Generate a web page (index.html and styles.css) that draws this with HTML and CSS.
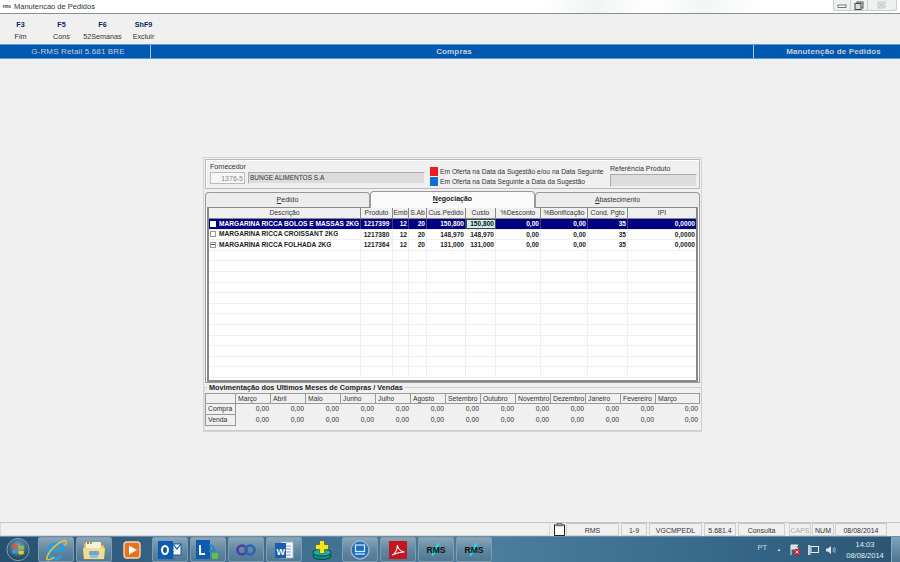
FILE: index.html
```html
<!DOCTYPE html>
<html lang="pt">
<head>
<meta charset="utf-8">
<title>Manutencao de Pedidos</title>
<link rel="stylesheet" href="styles.css">
</head>
<body>
<div class="app">
  <header class="titlebar">
    <span class="app-icon">rms</span>
    <span class="title-text">Manutencao de Pedidos</span>
    <div class="winctl">
      <span class="wbtn"><svg width="10" height="8" viewBox="0 0 10 8"><rect x="1" y="4" width="8" height="2.4" fill="#fff" stroke="#555" stroke-width=".8"/></svg></span>
      <span class="wbtn"><svg width="10" height="9" viewBox="0 0 10 9"><rect x="3" y="1" width="6" height="6" fill="#ddd" stroke="#555"/><rect x="1" y="2.500" width="6" height="6" fill="#ddd" stroke="#444"/></svg></span>
      <span class="wbtn wide"><svg width="10" height="8" viewBox="0 0 10 8"><rect x="1" y="1" width="7" height="6" fill="#e3e3e3" stroke="#ccc"/><path d="M2 2l5 4M7 2l-5 4" stroke="#c4c4c4"/></svg></span>
    </div>
  </header>

  <nav class="toolbar">
    <div class="tool"><b>F3</b><span>Fim</span></div>
    <div class="tool"><b>F5</b><span>Cons</span></div>
    <div class="tool"><b>F6</b><span>52Semanas</span></div>
    <div class="tool"><b>ShF9</b><span>Excluir</span></div>
  </nav>

  <div class="banner">
    <div class="b-left">G-RMS Retail 5.681 BRE</div>
    <div class="b-mid">Compras</div>
    <div class="b-right">Manutenção de Pedidos</div>
  </div>

  <main class="workspace">
    <section class="panel">
      <div class="supplier">
        <div class="sup-left">
          <div class="lbl">Fornecedor</div>
          <div class="sup-fields">
            <span class="code">1376-5</span>
            <span class="name">BUNGE ALIMENTOS S.A</span>
          </div>
        </div>
        <div class="legend">
          <div class="leg-row"><i class="sw red"></i>Em Oferta na Data da Sugestão e/ou na Data Seguinte</div>
          <div class="leg-row"><i class="sw blue"></i>Em Oferta na Data Seguinte a Data da Sugestão</div>
        </div>
        <div class="ref">
          <div class="lbl">Referência Produto</div>
          <div class="ref-box"></div>
        </div>
      </div>

      <div class="tabs">
        <div class="tab t1"><u>P</u>edido</div>
        <div class="tab t2 active"><u>N</u>egociação</div>
        <div class="tab t3"><u>A</u>bastecimento</div>
      </div>

      <div class="tabpage">
        <div class="grid">
          <div class="row head">
            <div class="c">Descrição</div><div class="c">Produto</div><div class="c">Emb</div><div class="c">S.Ab</div><div class="c">Cus.Pedido</div><div class="c">Custo</div><div class="c">%Desconto</div><div class="c">%Bonificação</div><div class="c">Cond. Pgto</div><div class="c">IPI</div>
          </div>
          <div class="row data sel">
            <div class="c l"><i class="chk on"></i><span class="clip">MARGARINA RICCA BOLOS E MASSAS 2KG</span></div><div class="c">1217399</div><div class="c r">12</div><div class="c r">20</div><div class="c r">150,800</div><div class="c r cur">150,800</div><div class="c r">0,00</div><div class="c r">0,00</div><div class="c r">35</div><div class="c r">0,0000</div>
          </div>
          <div class="row data">
            <div class="c l"><i class="chk"></i><span class="clip">MARGARINA RICCA CROISSANT 2KG</span></div><div class="c">1217380</div><div class="c r">12</div><div class="c r">20</div><div class="c r">148,970</div><div class="c r">148,970</div><div class="c r">0,00</div><div class="c r">0,00</div><div class="c r">35</div><div class="c r">0,0000</div>
          </div>
          <div class="row data">
            <div class="c l"><i class="chk minus"></i><span class="clip">MARGARINA RICCA FOLHADA 2KG</span></div><div class="c">1217364</div><div class="c r">12</div><div class="c r">20</div><div class="c r">131,000</div><div class="c r">131,000</div><div class="c r">0,00</div><div class="c r">0,00</div><div class="c r">35</div><div class="c r">0,0000</div>
          </div>
          <div class="row data"><div class="c"></div><div class="c"></div><div class="c"></div><div class="c"></div><div class="c"></div><div class="c"></div><div class="c"></div><div class="c"></div><div class="c"></div><div class="c"></div></div>
          <div class="row data"><div class="c"></div><div class="c"></div><div class="c"></div><div class="c"></div><div class="c"></div><div class="c"></div><div class="c"></div><div class="c"></div><div class="c"></div><div class="c"></div></div>
          <div class="row data"><div class="c"></div><div class="c"></div><div class="c"></div><div class="c"></div><div class="c"></div><div class="c"></div><div class="c"></div><div class="c"></div><div class="c"></div><div class="c"></div></div>
          <div class="row data"><div class="c"></div><div class="c"></div><div class="c"></div><div class="c"></div><div class="c"></div><div class="c"></div><div class="c"></div><div class="c"></div><div class="c"></div><div class="c"></div></div>
          <div class="row data"><div class="c"></div><div class="c"></div><div class="c"></div><div class="c"></div><div class="c"></div><div class="c"></div><div class="c"></div><div class="c"></div><div class="c"></div><div class="c"></div></div>
          <div class="row data"><div class="c"></div><div class="c"></div><div class="c"></div><div class="c"></div><div class="c"></div><div class="c"></div><div class="c"></div><div class="c"></div><div class="c"></div><div class="c"></div></div>
          <div class="row data"><div class="c"></div><div class="c"></div><div class="c"></div><div class="c"></div><div class="c"></div><div class="c"></div><div class="c"></div><div class="c"></div><div class="c"></div><div class="c"></div></div>
          <div class="row data"><div class="c"></div><div class="c"></div><div class="c"></div><div class="c"></div><div class="c"></div><div class="c"></div><div class="c"></div><div class="c"></div><div class="c"></div><div class="c"></div></div>
          <div class="row data"><div class="c"></div><div class="c"></div><div class="c"></div><div class="c"></div><div class="c"></div><div class="c"></div><div class="c"></div><div class="c"></div><div class="c"></div><div class="c"></div></div>
          <div class="row data"><div class="c"></div><div class="c"></div><div class="c"></div><div class="c"></div><div class="c"></div><div class="c"></div><div class="c"></div><div class="c"></div><div class="c"></div><div class="c"></div></div>
          <div class="row data"><div class="c"></div><div class="c"></div><div class="c"></div><div class="c"></div><div class="c"></div><div class="c"></div><div class="c"></div><div class="c"></div><div class="c"></div><div class="c"></div></div>
          <div class="row data"><div class="c"></div><div class="c"></div><div class="c"></div><div class="c"></div><div class="c"></div><div class="c"></div><div class="c"></div><div class="c"></div><div class="c"></div><div class="c"></div></div>
        </div>
      </div>

      <fieldset class="moves">
        <legend>Movimentação dos Ultimos Meses de Compras / Vendas</legend>
        <div class="mgrid">
          <div class="m h"></div><div class="m h">Março</div><div class="m h">Abril</div><div class="m h">Maio</div><div class="m h">Junho</div><div class="m h">Julho</div><div class="m h">Agosto</div><div class="m h">Setembro</div><div class="m h">Outubro</div><div class="m h">Novembro</div><div class="m h">Dezembro</div><div class="m h">Janeiro</div><div class="m h">Fevereiro</div><div class="m h">Março</div>
          <div class="m h">Compra</div><div class="m v">0,00</div><div class="m v">0,00</div><div class="m v">0,00</div><div class="m v">0,00</div><div class="m v">0,00</div><div class="m v">0,00</div><div class="m v">0,00</div><div class="m v">0,00</div><div class="m v">0,00</div><div class="m v">0,00</div><div class="m v">0,00</div><div class="m v">0,00</div><div class="m v">0,00</div>
          <div class="m h">Venda</div><div class="m v">0,00</div><div class="m v">0,00</div><div class="m v">0,00</div><div class="m v">0,00</div><div class="m v">0,00</div><div class="m v">0,00</div><div class="m v">0,00</div><div class="m v">0,00</div><div class="m v">0,00</div><div class="m v">0,00</div><div class="m v">0,00</div><div class="m v">0,00</div><div class="m v">0,00</div>
        </div>
      </fieldset>
    </section>
  </main>

  <footer class="status">
    <div class="st-spacer"></div>
    <div class="st st-ico"><svg width="13" height="13" viewBox="0 0 13 13"><rect x="1.500" y="2" width="10" height="10.500" fill="#fff" stroke="#222"/><rect x="4" y="0.500" width="5" height="2.500" fill="#999" stroke="#444" stroke-width=".6"/></svg></div>
    <div class="st s1">RMS</div>
    <div class="st s2">1-9</div>
    <div class="st s3">VGCMPEDL</div>
    <div class="st s4">5.681.4</div>
    <div class="st s5">Consulta</div>
    <div class="st s6 off">CAPS</div>
    <div class="st s7">NUM</div>
    <div class="st s8">08/08/2014</div>
  </footer>

  <div class="taskbar">
    <div class="start"><svg width="26" height="25" viewBox="0 0 26 26">
      <defs><radialGradient id="orb" cx=".5" cy=".35" r=".7"><stop offset="0" stop-color="#6fa8c8"/><stop offset="1" stop-color="#12314a"/></radialGradient></defs>
      <circle cx="13" cy="13" r="11.500" fill="url(#orb)" stroke="#8aa3b4" stroke-width="1"/>
      <path d="M7 8.500q3-1.200 5.500 0v4q-2.500-1-5.500 0z" fill="#e8552a"/>
      <path d="M13.500 8.700q3 1.200 5.500 0v4q-3 1.200-5.500 0z" fill="#8cc63e"/>
      <path d="M7 13.500q3-1 5.500 0v4q-2.500-1-5.500 0z" fill="#3a9ad9"/>
      <path d="M13.500 13.700q3 1.200 5.500 0v4q-3 1.200-5.500 0z" fill="#f5c32c"/>
    </svg></div>

    <div class="tb on"><svg width="24" height="24" viewBox="0 0 24 24"><path d="M19.500 12.500a7.500 7.500 0 1 0-2 6" fill="none" stroke="#2a9be0" stroke-width="3"/><rect x="6" y="11.200" width="13.500" height="2.400" fill="#2a9be0"/><path d="M2.500 21C4 14 12 5 21 2.500c1.500 0 1.500 2.500 0 5" fill="none" stroke="#f0c23a" stroke-width="1.400"/><path d="M2.500 21c1.500 2 5 0 8-2" fill="none" stroke="#f0c23a" stroke-width="1.400"/></svg></div>

    <div class="tb on"><svg width="24" height="22" viewBox="0 0 24 22"><path d="M2 4h7l2 2h11v14H2z" fill="#e6c66a" stroke="#b99a4a" stroke-width=".6"/><rect x="4" y="3" width="15" height="6" fill="#f6f1d8"/><circle cx="6" cy="4" r="1" fill="#c33"/><circle cx="9" cy="4" r="1" fill="#3a3"/><path d="M1 9h22l-1 11H2z" fill="#f4dc8e"/><rect x="7" y="12" width="10" height="4" rx="1" fill="#6fa7d6"/><rect x="8" y="16" width="8" height="3" fill="#8ebfe4"/></svg></div>

    <div class="tb"><svg width="20" height="20" viewBox="0 0 20 20"><rect x="2" y="2" width="16" height="16" rx="3" fill="#e8731c" stroke="#f3d6b8" stroke-width="1.400"/><path d="M7 5.500l8 4.500-8 4.500z" fill="#fff"/></svg></div>

    <div class="tb on"><svg width="24" height="20" viewBox="0 0 24 20"><rect x="0" y="1" width="15" height="18" fill="#0c5bb0"/><ellipse cx="7" cy="10" rx="3" ry="4" fill="none" stroke="#fff" stroke-width="2"/><rect x="15" y="4" width="8" height="11" fill="#fff"/><path d="M15 4l4 5 4-5" fill="none" stroke="#0c5bb0" stroke-width="1.200"/><rect x="15" y="4" width="8" height="11" fill="none" stroke="#0c5bb0"/></svg></div>

    <div class="tb on"><svg width="24" height="20" viewBox="0 0 24 20"><rect x="0" y="0" width="14" height="19" fill="#0c5bb0"/><path d="M4 5v9h5" fill="none" stroke="#fff" stroke-width="2"/><path d="M13 5a5 5 0 0 1 5 5v1h-5" fill="none" stroke="#1f86d0" stroke-width="2"/><rect x="16" y="13" width="6" height="6" fill="#5fc24a"/></svg></div>

    <div class="tb on"><svg width="24" height="14" viewBox="0 0 24 14"><circle cx="8" cy="7" r="4.500" fill="none" stroke="#4a3fa0" stroke-width="2.600"/><circle cx="16" cy="7" r="4.500" fill="none" stroke="#2d63b5" stroke-width="2.600"/></svg></div>

    <div class="tb on"><svg width="20" height="20" viewBox="0 0 20 20"><rect x="7" y="2" width="12" height="16" fill="#fff" stroke="#9bb6d6"/><path d="M12 6h5M12 9h5M12 12h5M12 15h5" stroke="#6d94c6"/><rect x="1" y="3" width="11" height="15" fill="#1e5dab"/><text x="2.600" y="14.500" class="word-w">W</text></svg></div>

    <div class="tb"><svg width="20" height="22" viewBox="0 0 20 22"><ellipse cx="10" cy="17" rx="9" ry="3.500" fill="#0e8f8a" stroke="#04403d"/><ellipse cx="10" cy="13.500" rx="9" ry="3.500" fill="#17b0a6" stroke="#04403d"/><path d="M7.500 1.500h5v4h4v5h-4v4h-5v-4h-4v-5h4z" fill="#f3e61c" stroke="#444" stroke-width=".6"/></svg></div>

    <div class="tb on"><svg width="20" height="20" viewBox="0 0 20 20"><circle cx="10" cy="10" r="9" fill="#1c6fc0" stroke="#9fb3c4" stroke-width="1.400"/><rect x="5.500" y="5" width="9" height="6.500" fill="none" stroke="#dcecf8" stroke-width="1.200"/><path d="M5 14h10" stroke="#dcecf8" stroke-width="1.200"/></svg></div>

    <div class="tb on"><svg width="18" height="18" viewBox="0 0 18 18"><rect width="18" height="18" fill="#c4161c"/><path d="M3 14c3-1 5-5 5.500-10 .5 4 3 6.500 7 7-4 0-8 1-12.500 3z" fill="none" stroke="#fff" stroke-width="1.100"/></svg></div>

    <div class="tb on fms"><span class="swoosh"></span><b>RMS</b></div>
    <div class="tb on fms"><span class="swoosh"></span><b>RMS</b></div>

    <div class="tray">
      <span class="lang">PT</span>
      <span class="arrow">▲</span>
      <svg width="12" height="12" viewBox="0 0 12 12"><path d="M2 1v10M2 1h7l-1.500 2L9 5H2" fill="#ddd" stroke="#eee"/><circle cx="8" cy="8" r="3.200" fill="#c9252c"/><path d="M6.500 6.500l3 3M9.500 6.500l-3 3" stroke="#fff" stroke-width=".8"/></svg>
      <svg width="12" height="12" viewBox="0 0 12 12"><rect x="4" y="2.500" width="7.500" height="6" fill="none" stroke="#e6edf2"/><path d="M1 1h2.500v10H1z" fill="#c6d3dc"/></svg>
      <svg width="12" height="12" viewBox="0 0 12 12"><path d="M1 4.500h2L6 2v8L3 7.500H1z" fill="#dde6ec"/><path d="M8 4q1 2 0 4M9.500 3q1.500 3 0 6" fill="none" stroke="#b7c8d4" stroke-width=".8"/></svg>
      <div class="clock"><div>14:03</div><div>08/08/2014</div></div>
      <div class="showdesk"></div>
    </div>
  </div>
</div>
</body>
</html>
```
FILE: styles.css
```css
* { box-sizing: border-box; }
html, body { margin: 0; padding: 0; }
body { width: 900px; height: 562px; overflow: hidden; font-family: "Liberation Sans", Arial, sans-serif; font-size: 7.500px; color: #222; background: #f0f0f0; }
.app { display: flex; flex-direction: column; width: 900px; height: 562px; }

.titlebar { height: 14px; flex: none; display: flex; align-items: center; background: linear-gradient(100deg, #fff 0 60%, #f1f4f5 66%, #fff 72%, #f4f6f6 78%, #fff 85%); border-bottom: 1px solid #8b8f8f; padding-left: 1px; }
.app-icon { width: 12px; font-size: 4.500px; font-weight: bold; color: #303060; text-align: center; }
.title-text { margin-left: 1px; font-size: 7.500px; color: #333; }
.winctl { margin-left: auto; margin-right: 3px; align-self: flex-start; display: flex; height: 11px; width: 64px; border: 1px solid #c4cdd0; border-top: 0; border-radius: 0 0 3px 3px; background: #eef1f2; }
.wbtn { flex: 1; display: flex; align-items: center; justify-content: center; border-right: 1px solid #c4cdd0; }
.wbtn.wide { flex: 1.700; border-right: 0; }

.toolbar { height: 30px; flex: none; display: flex; padding-top: 6px; background: #f0f0f0; }
.tool { width: 41px; display: flex; flex-direction: column; align-items: center; gap: 3px; font-size: 7.200px; line-height: 9px; white-space: nowrap; }
.tool b { color: #0c1f66; }
.tool span { color: #333; }

.banner { height: 15px; flex: none; display: flex; background: #0058b0; border-top: 1px solid #5a9be0; border-bottom: 1px solid #5a9be0; color: #c4d0dc; font-weight: bold; font-size: 8px; line-height: 14px; text-align: center; letter-spacing: .15px; }
.b-left { width: 151px; padding-left: 6px; border-right: 1px solid #a8c8ea; font-weight: normal; font-size: 8px; }
.b-mid { width: 603px; padding-left: 4px; border-right: 1px solid #a8c8ea; }
.b-right { flex: 1; padding-left: 13px; }

.workspace { flex: 1; padding: 98px 0 0 203px; min-height: 0; }
.panel { width: 499px; height: 275px; padding: 1px; background: #f0f0f0; border: 1px solid #d4d4d4; }

.supplier { height: 30px; display: flex; padding: 2px 0 0 4px; border: 1px solid #bbb; box-shadow: inset 1px 1px 0 #fff; }
.lbl { font-size: 7px; line-height: 9px; color: #333; }
.sup-left { width: 220px; }
.sup-fields { display: flex; margin-top: 1px; gap: 3px; }
.code { width: 35px; height: 12px; background: #f6f6f6; border: 1px solid #bbb; color: #888; text-align: right; line-height: 11px; padding-right: 1px; font-size: 7px; }
.name { width: 177px; height: 12px; background: #dcdcdc; border: 1px solid #aaa; border-right-color: #eee; border-bottom-color: #eee; line-height: 10px; padding-left: 1px; font-size: 6.500px; color: #333; }
.legend { width: 180px; padding-top: 4px; }
.leg-row { display: flex; align-items: center; height: 10px; gap: 2px; font-size: 6.700px; color: #333; white-space: nowrap; }
.sw { width: 8px; height: 9px; flex: none; }
.sw.red { background: #ed1c24; }
.sw.blue { background: #0f6fd8; }
.ref { padding-top: 2px; }
.ref-box { width: 87px; height: 13px; margin-top: 1px; background: #dcdcdc; border: 1px solid #aaa; border-right-color: #eee; border-bottom-color: #eee; }

.tabs { display: flex; height: 16px; margin-top: 2px; position: relative; font-size: 7px; }
.tab { text-align: center; line-height: 14px; background: #ececec; border: 1px solid #999; border-bottom: 0; border-radius: 4px 4px 0 0; color: #333; width: 165px; }
.t1 { margin-top: 1px; }
.t2 { background: #fafafa; font-weight: bold; color: #222; height: 17px; position: relative; z-index: 1; }
.t3 { margin-top: 1px; font-size: 6.800px; }
.tabpage { height: 177px; margin-top: -1px; padding: 0 0 0 1px; background: #fff; border: 1px solid #999; }
.grid { width: 491px; height: 175px; border: 2px solid #8a8a8a; border-top-width: 1px; background: #fff; overflow: hidden; }

.row { display: grid; grid-template-columns: 152px 32px 16px 18px 39px 30px 45px 47px 40px 69px; }
.row.head { height: 11px; background: #f0f0f0; border-bottom: 1px solid #888; text-align: center; line-height: 9px; font-size: 6.800px; color: #333; }
.row.head .c { border-right: 1px solid #888; white-space: nowrap; overflow: hidden; }
.row.data { height: 10.600px; font-size: 6.600px; line-height: 10px; font-weight: bold; color: #222; border-bottom: 1px solid #efefef; }
.row.data .c { border-right: 1px solid #efefef; text-align: center; white-space: nowrap; overflow: hidden; }
.row.data .r { text-align: right; padding-right: 1px; }
.row.data .l { display: flex; align-items: center; text-align: left; padding-left: 1px; }
.clip { overflow: hidden; }
.row.sel { background: #000080; color: #fff; }
.row.sel .c { border-right-color: #3a3a9a; }
.row.sel .cur { background: #c8f0ee; color: #111; border: 1px solid #444; line-height: 8px; }
.chk { width: 6px; height: 6px; margin-right: 3px; flex: none; border: 1px solid #999; background: #fff; position: relative; }
.chk.on { border-color: #fff; }
.chk.minus::after { content: ""; position: absolute; left: 0; right: 0; top: 1.500px; height: 1px; background: #555; }

.moves { margin: 0 -2px 0 -1px; padding: 0 0 3px; height: 48px; border: 1px solid #ccc; border-left-color: #ddd; min-width: 0; }
.moves legend { padding: 0 2px; margin-left: 2px; font-size: 7.270px; line-height: 9px; font-weight: bold; color: #222; }
.mgrid { display: grid; grid-template-columns: 30px repeat(12, 35px) 44px; grid-template-rows: 10px 11px 11px; border: 1px solid #999; border-width: 1px 0 0 1px; margin-top: 1px; width: 495px; }
.m { font-size: 6.800px; line-height: 10px; color: #333; white-space: nowrap; }
.m.h { background: #f0f0f0; border-right: 1px solid #999; border-bottom: 1px solid #999; padding-left: 2px; overflow: hidden; }
.m.v { text-align: right; padding-right: 2px; }

.status { height: 14px; flex: none; display: flex; gap: 2px; background: #f0f0f0; border-top: 1px solid #c8c8c8; font-size: 7px; line-height: 13px; text-align: center; color: #333; padding-right: 13px; }
.st-spacer { width: 550px; border: 1px solid #d8d8d8; border-top: 0; }
.st { border: 1px solid #d0d0d0; border-top-color: #c4c4c4; }
.st-ico { width: 14px; border: 0; display: flex; justify-content: center; }
.s1 { width: 53px; margin-left: -2px; }
.s2 { width: 26px; }
.s3 { width: 53px; }
.s4 { width: 32px; }
.s5 { width: 47px; }
.s6 { width: 22px; margin-left: 2px; }
.s6.off { color: #aaa; }
.s7 { width: 22px; margin-left: -1px; }
.s8 { width: 52px; margin-left: -1px; }

.taskbar { height: 26px; flex: none; display: flex; align-items: stretch; gap: 2px; background: linear-gradient(90deg, #27506e 0, #3b6b8d 25%, #4a7d9e 55%, #36688a 80%, #2b5672 100%); border-top: 1px solid #6a8ea6; }
.start { width: 36px; display: flex; align-items: center; justify-content: center; }
.tb { width: 36px; flex: none; display: flex; align-items: center; justify-content: center; position: relative; }
.tb.on { background: linear-gradient(180deg, #8aa6b8 0, #668ba3 45%, #4f7892 100%); border: 1px solid #7f9db0; border-radius: 2px; }
.word-w { font: bold 9px "Liberation Sans", sans-serif; fill: #fff; }
.fms b { font-size: 8.500px; color: #111; position: relative; }
.swoosh { position: absolute; left: 15px; top: 4px; width: 3px; height: 15px; background: #18dfe0; border-radius: 50%; transform: rotate(28deg); }
.tray { margin-left: auto; display: flex; align-items: center; gap: 6px; color: #e4ecf2; font-size: 7.500px; }
.lang { margin-right: 4px; margin-top: -4px; color: #cfdbe4; }
.arrow { font-size: 4px; margin-right: 2px; }
.clock { margin-left: 1px; text-align: center; line-height: 11px; font-size: 7.500px; width: 42px; }
.showdesk { width: 9px; height: 100%; margin-left: -1px; background: linear-gradient(180deg, #7fa3b8, #4e7690); border-left: 1px solid #8aa9bc; }
```
